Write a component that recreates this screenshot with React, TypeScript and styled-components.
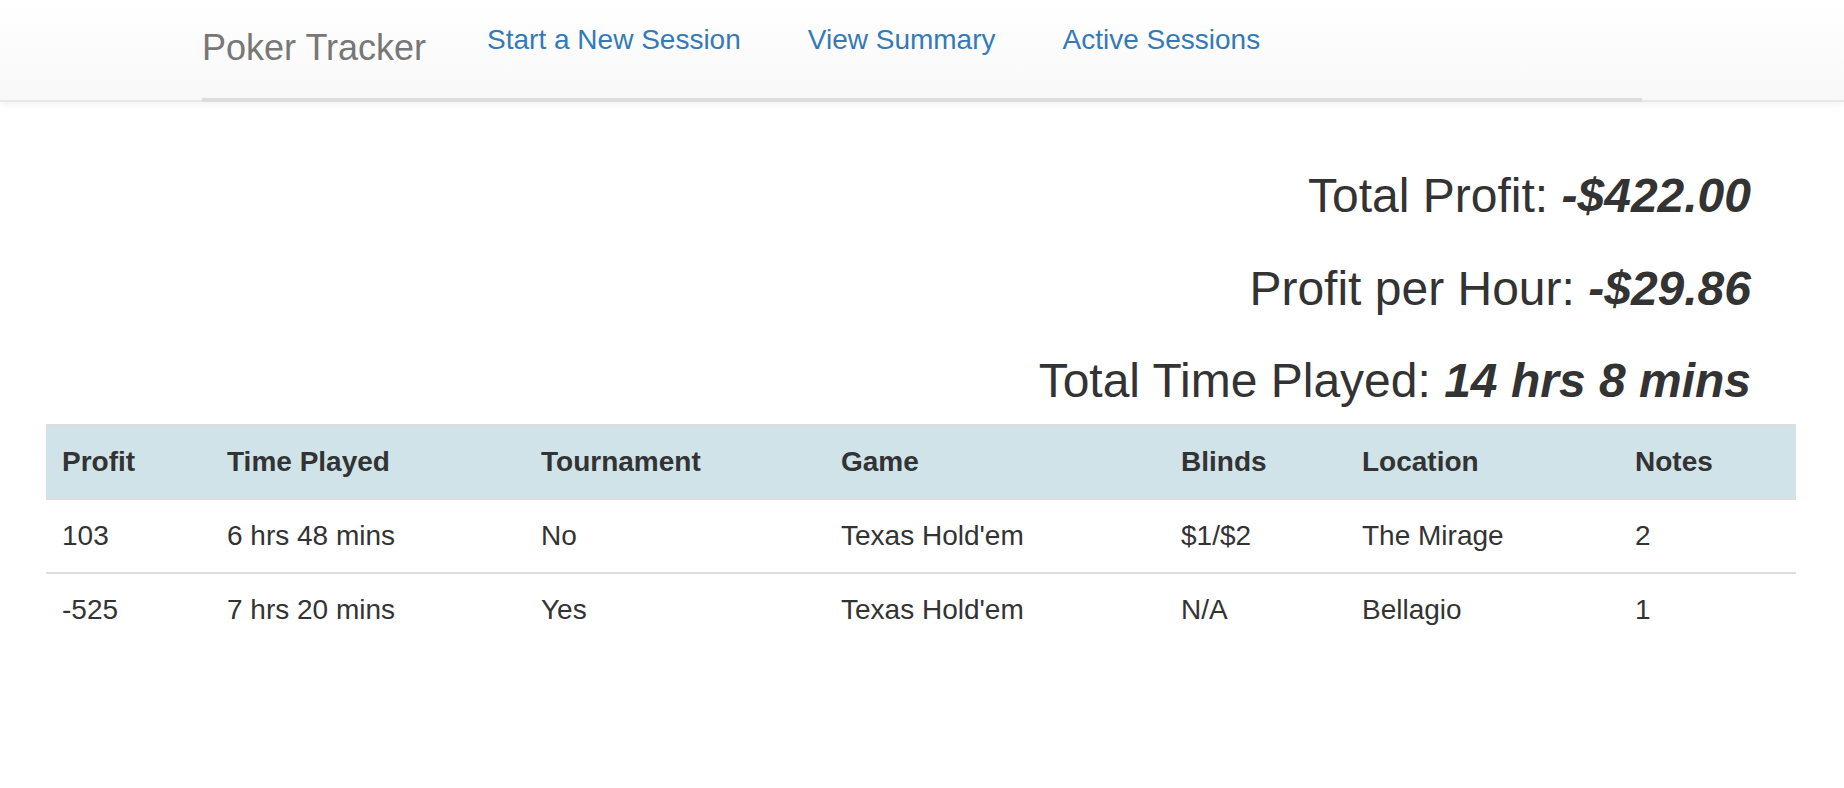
import React from 'react';
import styled, { createGlobalStyle } from 'styled-components';

type Session = {
  profit: string;
  time: string;
  tournament: string;
  game: string;
  blinds: string;
  location: string;
  notes: string;
};

const sessions: Session[] = [
  {
    profit: '103',
    time: '6 hrs 48 mins',
    tournament: 'No',
    game: "Texas Hold'em",
    blinds: '$1/$2',
    location: 'The Mirage',
    notes: '2'
  },
  {
    profit: '-525',
    time: '7 hrs 20 mins',
    tournament: 'Yes',
    game: "Texas Hold'em",
    blinds: 'N/A',
    location: 'Bellagio',
    notes: '1'
  }
];

const columns = [
  { label: 'Profit', width: 165 },
  { label: 'Time Played', width: 314 },
  { label: 'Tournament', width: 300 },
  { label: 'Game', width: 340 },
  { label: 'Blinds', width: 181 },
  { label: 'Location', width: 273 },
  { label: 'Notes', width: 177 }
];

const stats = [
  { label: 'Total Profit:', value: '-$422.00' },
  { label: 'Profit per Hour:', value: '-$29.86' },
  { label: 'Total Time Played:', value: '14 hrs 8 mins' }
];

const GlobalStyle = createGlobalStyle`
  html, body {
    margin: 0;
    padding: 0;
    background: #fff;
  }

  body {
    font-family: "Liberation Sans", Arial, Helvetica, sans-serif;
    color: #333;
    -webkit-font-smoothing: antialiased;
  }

  * {
    box-sizing: border-box;
  }
`;

const App = () => {
  return (
    <>
      <GlobalStyle />
      <Navbar>
        <NavContainer>
          <Brand href="#">Poker Tracker</Brand>
          <NavList>
            <NavItem>
              <NavLink href="#">Start a New Session</NavLink>
            </NavItem>
            <NavItem>
              <NavLink href="#">View Summary</NavLink>
            </NavItem>
            <NavItem>
              <NavLink href="#">Active Sessions</NavLink>
            </NavItem>
          </NavList>
        </NavContainer>
      </Navbar>

      <Main>
        <Summary>
          {stats.map((stat) => (
            <StatLine key={stat.label}>
              {stat.label} <StatValue>{stat.value}</StatValue>
            </StatLine>
          ))}
        </Summary>

        <SessionTable>
          <colgroup>
            {columns.map((col) => (
              <col key={col.label} style={{ width: col.width }} />
            ))}
          </colgroup>
          <thead>
            <HeadRow>
              {columns.map((col) => (
                <HeadCell key={col.label}>{col.label}</HeadCell>
              ))}
            </HeadRow>
          </thead>
          <tbody>
            {sessions.map((s, i) => (
              <tr key={i}>
                <Cell>{s.profit}</Cell>
                <Cell>{s.time}</Cell>
                <Cell>{s.tournament}</Cell>
                <Cell>{s.game}</Cell>
                <Cell>{s.blinds}</Cell>
                <Cell>{s.location}</Cell>
                <Cell>{s.notes}</Cell>
              </tr>
            ))}
          </tbody>
        </SessionTable>
      </Main>
    </>
  );
};

export default App;

const Navbar = styled.nav`
  background: linear-gradient(to bottom, #ffffff 0%, #f8f8f8 100%);
  border-bottom: 2px solid #e7e7e7;
  box-shadow: 0 2px 8px rgba(0, 0, 0, 0.06);
`;

const NavContainer = styled.div`
  width: 1440px;
  height: 102px;
  margin: 0 auto -2px;
  display: flex;
  align-items: flex-start;
  border-bottom: 4px solid #dcdcdc;
`;

const Brand = styled.a`
  display: block;
  padding-top: 28px;
  margin-right: 61px;
  font-size: 36px;
  line-height: 40px;
  color: #777;
  text-decoration: none;
`;

const NavList = styled.ul`
  display: flex;
  gap: 67px;
  list-style: none;
  margin: 0;
  padding: 20px 0 0;
`;

const NavItem = styled.li`
  display: block;
`;

const NavLink = styled.a`
  font-size: 28px;
  line-height: 40px;
  color: #337ab7;
  text-decoration: none;
`;

const Main = styled.main`
  width: 1750px;
  margin-left: 46px;
  padding-top: 67px;
`;

const Summary = styled.section`
  padding-right: 45px;
  text-align: right;
`;

const StatLine = styled.h3`
  margin: 0 0 39.5px;
  font-size: 48px;
  line-height: 53px;
  font-weight: 400;
  color: #333;

  &:last-child {
    margin-bottom: 17px;
  }
`;

const StatValue = styled.em`
  font-weight: 700;
  font-style: italic;
`;

const SessionTable = styled.table`
  width: 1750px;
  border-collapse: collapse;
  table-layout: fixed;
  font-size: 28px;
  line-height: 40px;
  color: #333;
`;

const HeadRow = styled.tr`
  background: #cfe3e9;
`;

const HeadCell = styled.th`
  padding: 16px;
  text-align: left;
  font-weight: 700;
  vertical-align: bottom;
  border-top: 2px solid #dddddd;
  border-bottom: 2px solid #dddddd;
`;

const Cell = styled.td`
  padding: 16px;
  text-align: left;
  vertical-align: top;
  border-top: 2px solid #dddddd;
`;
